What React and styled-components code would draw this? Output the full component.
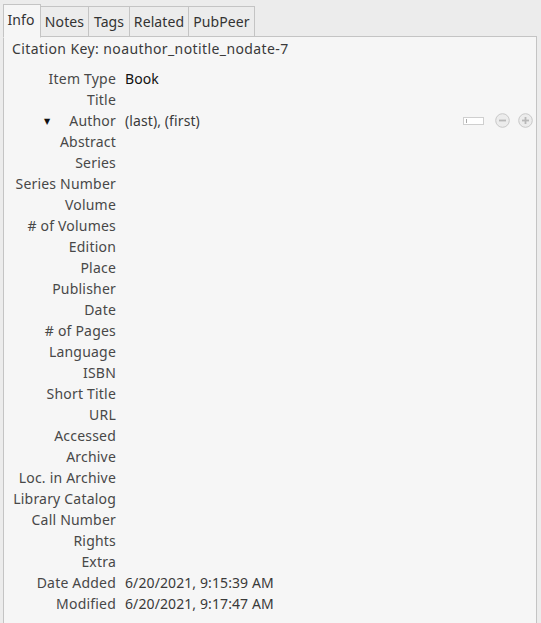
import React from "react";
import styled, { createGlobalStyle } from "styled-components";

const Global = createGlobalStyle`
  html, body { margin: 0; padding: 0; background: #ececec; }
  body { font-family: "Noto Sans", "DejaVu Sans", sans-serif; font-size: 14px; }
  #root { width: 541px; height: 623px; overflow: hidden; }
`;

const Wrap = styled.div`
  width: 541px;
  height: 623px;
  background: #ececec;
  padding: 4px 4px 0 3px;
  box-sizing: border-box;
  display: flex;
  flex-direction: column;
`;

const TabBar = styled.div`
  display: flex;
  align-items: flex-end;
  height: 33px;
  position: relative;
  z-index: 1;
  margin-bottom: -1px;
`;

const Tab = styled.div`
  box-sizing: border-box;
  height: ${(p) => (p.$active ? "34px" : "31px")};
  width: ${(p) => p.$w}px;
  border: 1px solid #c4c4c4;
  border-left-width: ${(p) => (p.$first || p.$active ? "1px" : "0")};
  border-bottom-color: ${(p) => (p.$active ? "#f6f6f6" : "#c4c4c4")};
  background: ${(p) => (p.$active ? "#f6f6f6" : "#ececec")};
  color: #333;
  display: flex;
  align-items: center;
  justify-content: center;
  padding-bottom: ${(p) => (p.$active ? "4px" : "1px")};
  padding-right: ${(p) => (p.$active ? "2px" : "0")};
  font-size: 14px;
  letter-spacing: 0.1px;
  align-self: ${(p) => (p.$active ? "flex-start" : "auto")};
  margin-bottom: ${(p) => (p.$active ? "-1px" : "0")};
`;

const Panel = styled.div`
  flex: 1;
  border: 1px solid #c4c4c4;
  border-bottom: none;
  background: #f6f6f6;
  box-sizing: border-box;
  padding: 2px 0 0 8px;
`;

const Citation = styled.div`
  color: #3a3a3a;
  height: 20px;
  line-height: 20px;
  letter-spacing: 0.4px;
`;

const Grid = styled.div`
  display: grid;
  grid-template-columns: 104px 1fr;
  column-gap: 9px;
  margin-top: 9px;
`;

const Label = styled.div`
  height: 21px;
  line-height: 21px;
  text-align: right;
  color: #484848;
  white-space: nowrap;
  position: relative;
  letter-spacing: 0.2px;
`;

const Value = styled.div`
  height: 21px;
  line-height: 21px;
  color: ${(p) => (p.$dark ? "#111" : "#3a3a3a")};
  display: flex;
  align-items: center;
  white-space: nowrap;
  letter-spacing: 0.1px;
`;

const Arrow = styled.span`
  position: absolute;
  left: 32px;
  top: 0;
  font-size: 8px;
  color: #111;
`;

const Controls = styled.div`
  margin-left: auto;
  margin-right: 3px;
  display: flex;
  align-items: center;
  gap: 8px;
`;

const MiniBox = styled.div`
  width: 19px;
  height: 6px;
  border: 1px solid #cfcfcf;
  background: #fff;
  margin-right: 3px;
  position: relative;
  &::before {
    content: "";
    position: absolute;
    left: 2px;
    top: 1px;
    width: 1px;
    height: 4px;
    background: #aaa;
  }
`;

const CircleBtn = ({ plus }) => (
  <svg width="15" height="15" viewBox="0 0 15 15">
    <circle cx="7.5" cy="7.5" r="6.8" fill="#ececec" stroke="#c8c8c8" strokeWidth="1" />
    <rect x="4" y="6.6" width="7" height="1.8" fill="#b8b8b8" />
    {plus && <rect x="6.6" y="4" width="1.8" height="7" fill="#b8b8b8" />}
  </svg>
);

const rows = [
  ["Item Type", "Book", true],
  ["Title", ""],
  ["Author", "author"],
  ["Abstract", ""],
  ["Series", ""],
  ["Series Number", ""],
  ["Volume", ""],
  ["# of Volumes", ""],
  ["Edition", ""],
  ["Place", ""],
  ["Publisher", ""],
  ["Date", ""],
  ["# of Pages", ""],
  ["Language", ""],
  ["ISBN", ""],
  ["Short Title", ""],
  ["URL", ""],
  ["Accessed", ""],
  ["Archive", ""],
  ["Loc. in Archive", ""],
  ["Library Catalog", ""],
  ["Call Number", ""],
  ["Rights", ""],
  ["Extra", ""],
  ["Date Added", "6/20/2021, 9:15:39 AM"],
  ["Modified", "6/20/2021, 9:17:47 AM"],
];

const tabs = [
  ["Info", 38],
  ["Notes", 48],
  ["Tags", 41],
  ["Related", 59],
  ["PubPeer", 66],
];

export default function App() {
  return (
    <>
      <Global />
      <Wrap>
        <TabBar>
          {tabs.map(([t, w], i) => (
            <Tab key={t} $w={w} $active={i === 0} $first={i === 0}>
              {t}
            </Tab>
          ))}
        </TabBar>
        <Panel>
          <Citation>Citation Key: noauthor_notitle_nodate-7</Citation>
          <Grid>
            {rows.map(([l, v, dark]) => (
              <React.Fragment key={l}>
                <Label>
                  {v === "author" && <Arrow>▼</Arrow>}
                  {l}
                </Label>
                {v === "author" ? (
                  <Value>
                    (last), (first)
                    <Controls>
                      <MiniBox />
                      <CircleBtn />
                      <CircleBtn plus />
                    </Controls>
                  </Value>
                ) : (
                  <Value $dark={dark}>{v}</Value>
                )}
              </React.Fragment>
            ))}
          </Grid>
        </Panel>
      </Wrap>
    </>
  );
}
